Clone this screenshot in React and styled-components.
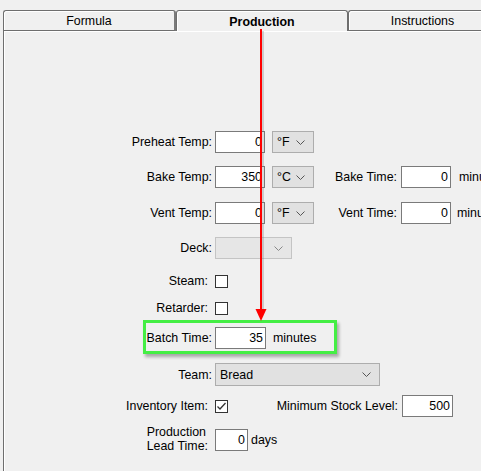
import styled, { createGlobalStyle } from "styled-components";

const Global = createGlobalStyle`
    html, body {
        margin: 0;
        padding: 0;
        background: #f0f0f0;
        overflow: hidden;
    }
    body {
        font-family: "Liberation Sans", Arial, sans-serif;
        font-size: 12.4px;
        color: #000;
    }
`

function Chevron({ color = "#555" }) {
    return (
        <svg width="9" height="5" viewBox="0 0 9 5">
            <path d="M0.5 0.5 L4.5 4.5 L8.5 0.5" fill="none" stroke={color} strokeWidth="1" />
        </svg>
    )
}

function Check() {
    return (
        <svg width="11" height="11" viewBox="0 0 11 11">
            <path d="M1.5 5.5 L4 8 L9.5 2" fill="none" stroke="#333" strokeWidth="1.3" />
        </svg>
    )
}

function Arrow() {
    return (
        <ArrowLayer width="20" height="300" viewBox="0 0 20 300">
            <g opacity="0.25">
                <line x1="10" y1="3" x2="10" y2="284" stroke="#666" strokeWidth="2" />
            </g>
            <line x1="8" y1="1" x2="8" y2="282" stroke="#ff0000" strokeWidth="2" />
            <polygon points="2.5,281 13.5,281 8,293" fill="#ff0000" />
        </ArrowLayer>
    )
}

export default function App() {
    return (
        <Screen>
            <Global />
            <TabStrip>
                <Tab $w={173}>Formula</Tab>
                <Tab $w={172} $active>Production</Tab>
                <Tab $w={150}>Instructions</Tab>
            </TabStrip>
            <Panel>
                <Row $top={100}>
                    <Label>Preheat Temp:</Label>
                    <Input $w={50} defaultValue="0" />
                    <Select $w={42} $ml={7}><span>°F</span><Chevron /></Select>
                </Row>
                <Row $top={13}>
                    <Label>Bake Temp:</Label>
                    <Input $w={50} defaultValue="350" />
                    <Select $w={42} $ml={7}><span>°C</span><Chevron /></Select>
                    <Label $w={87} $pad={4}>Bake Time:</Label>
                    <Input $w={50} defaultValue="0" />
                    <Unit $ml={8}>minutes</Unit>
                </Row>
                <Row $top={14}>
                    <Label>Vent Temp:</Label>
                    <Input $w={50} defaultValue="0" />
                    <Select $w={42} $ml={7}><span>°F</span><Chevron /></Select>
                    <Label $w={87} $pad={4}>Vent Time:</Label>
                    <Input $w={50} defaultValue="0" />
                    <Unit $ml={6}>minutes</Unit>
                </Row>
                <Row $top={13}>
                    <Label>Deck:</Label>
                    <Select $w={77} $disabled><span></span><Chevron color="#888" /></Select>
                </Row>
                <Row $top={11}>
                    <Label $pad={7}>Steam:</Label>
                    <Box />
                </Row>
                <Row $top={5}>
                    <Label $pad={7}>Retarder:</Label>
                    <Box />
                </Row>
                <Row $top={8}>
                    <Highlight />
                    <Label>Batch Time:</Label>
                    <Input $w={51} defaultValue="35" />
                    <Unit $ml={7}>minutes</Unit>
                </Row>
                <Row $top={14} $h={23}>
                    <Label>Team:</Label>
                    <Select $w={165} $h={23}><span>Bread</span><Chevron /></Select>
                </Row>
                <Row $top={9}>
                    <Label $pad={7}>Inventory Item:</Label>
                    <Box><Check /></Box>
                    <Label $w={174} $pad={4}>Minimum Stock Level:</Label>
                    <Input $w={51} defaultValue="500" />
                </Row>
                <Row $top={12}>
                    <Label $pad={7}>
                        <TwoLine>Production<br />Lead Time:</TwoLine>
                    </Label>
                    <Input $w={33} defaultValue="0" />
                    <Unit $ml={3}>days</Unit>
                </Row>
            </Panel>
            <Arrow />
        </Screen>
    )
}

const Screen = styled.div`
    position: relative;
    width: 481px;
    height: 471px;
    overflow: hidden;
    background: #f0f0f0;
`

const TabStrip = styled.div`
    display: flex;
    align-items: flex-end;
    padding: 10px 0 0 3px;
    height: 21px;
    white-space: nowrap;
`

const Tab = styled.div`
    flex-shrink: 0;
    box-sizing: border-box;
    width: ${props => props.$w}px;
    height: 21px;
    border: 1px solid #6e6e6e;
    border-bottom: ${props => props.$active ? "none" : "1px solid #6e6e6e"};
    border-right: ${props => props.$active ? "1px solid #6e6e6e" : "2px solid #7a7a7a"};
    border-radius: 3px 3px 0 0;
    box-shadow: inset 1px 1px 0 #ffffff;
    background: #f0f0f0;
    display: flex;
    justify-content: center;
    align-items: center;
    padding-top: ${props => props.$active ? "1px" : "0"};
    font-weight: ${props => props.$active ? "bold" : "normal"};
    color: #000;
`

const Panel = styled.div`
    margin-left: 3px;
    height: 440px;
    border-left: 1px solid #6e6e6e;
    box-shadow: inset 1px 1px 0 #ffffff;
    background: #f0f0f0;
    padding-top: 0.1px;
    white-space: nowrap;
`

const Row = styled.div`
    position: relative;
    display: flex;
    align-items: center;
    height: ${props => props.$h || 22}px;
    margin-top: ${props => props.$top}px;
    padding-left: 48px;
`

const Label = styled.div`
    flex-shrink: 0;
    box-sizing: border-box;
    width: ${props => props.$w || 163}px;
    padding-right: ${props => props.$pad ?? 3}px;
    text-align: right;
`

const TwoLine = styled.span`
    display: inline-block;
    text-align: left;
    line-height: 14px;
    margin-top: -3px;
`

const Input = styled.input`
    flex-shrink: 0;
    box-sizing: border-box;
    width: ${props => props.$w}px;
    height: 22px;
    margin: 0;
    padding: 0 2px 0 0;
    border: 1px solid #7a7a7a;
    border-radius: 0;
    background: #ffffff;
    font-family: "Liberation Sans", Arial, sans-serif;
    font-size: 12.4px;
    color: #000;
    text-align: right;
    outline: none;
`

const Select = styled.div`
    flex-shrink: 0;
    box-sizing: border-box;
    width: ${props => props.$w}px;
    height: ${props => props.$h || 22}px;
    margin-left: ${props => props.$ml || 0}px;
    display: flex;
    justify-content: space-between;
    align-items: center;
    padding: 0 8px 0 4px;
    border: 1px solid ${props => props.$disabled ? "#c4c4c4" : "#adadad"};
    background: ${props => props.$disabled ? "#e6e6e6" : "#e1e1e1"};
`

const Box = styled.div`
    flex-shrink: 0;
    box-sizing: border-box;
    width: 13px;
    height: 13px;
    border: 1px solid #333333;
    background: #ffffff;
    display: flex;
    justify-content: center;
    align-items: center;
`

const Unit = styled.span`
    flex-shrink: 0;
    margin-left: ${props => props.$ml}px;
`

const Highlight = styled.div`
    position: absolute;
    left: 139px;
    top: -7px;
    width: 194px;
    height: 34px;
    box-sizing: border-box;
    border: 3px solid #44ee44;
    box-shadow: 2px 3px 3px rgba(0, 0, 0, 0.3);
    pointer-events: none;
`

const ArrowLayer = styled.svg`
    position: absolute;
    left: 253px;
    top: 28px;
    pointer-events: none;
`
